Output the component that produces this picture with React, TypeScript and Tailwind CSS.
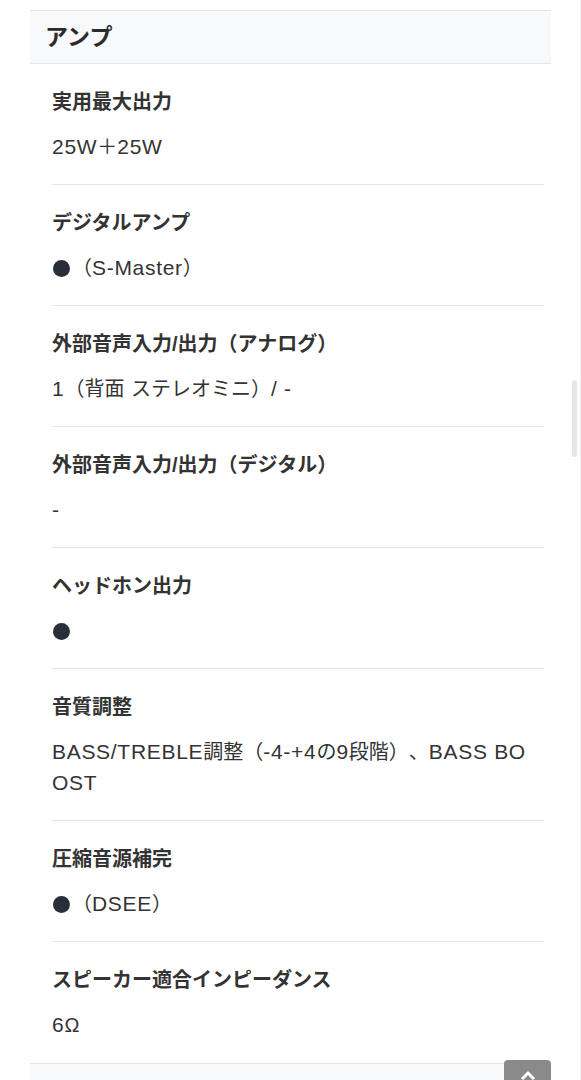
import React from "react";

const Dot = () => (
  <span className="inline-block align-middle w-[17px] h-[17px] rounded-full bg-[#2a2e39] ml-[1px] mr-[2px] -mt-[3px]" />
);

const Txt = ({ s }: { s: string }) => (
  <>
    {s.split(/([\x20-\x7e]+)/).map((p, i) =>
      /^[\x20-\x7e]+$/.test(p) ? (
        <span key={i} className="text-[21px] leading-[16px] tracking-[0.7px]">
          {p}
        </span>
      ) : (
        <React.Fragment key={i}>{p}</React.Fragment>
      )
    )}
  </>
);

const rows: { label: string; value: React.ReactNode }[] = [
  { label: "実用最大出力", value: <Txt s="25W＋25W" /> },
  { label: "デジタルアンプ", value: <><Dot /><Txt s="（S-Master）" /></> },
  { label: "外部音声入力/出力（アナログ）", value: <Txt s="1（背面 ステレオミニ）/ -" /> },
  { label: "外部音声入力/出力（デジタル）", value: <Txt s="-" /> },
  { label: "ヘッドホン出力", value: <Dot /> },
  { label: "音質調整", value: <Txt s="BASS/TREBLE調整（-4-+4の9段階）、BASS BOOST" /> },
  { label: "圧縮音源補完", value: <><Dot /><Txt s="（DSEE）" /></> },
  { label: "スピーカー適合インピーダンス", value: <Txt s="6Ω" /> },
];

export default function App() {
  return (
    <div
      className="relative min-h-[1080px] bg-white pt-[10px] overflow-hidden [text-spacing-trim:space-all]"
      style={{ fontFamily: '"Liberation Sans", "Noto Sans CJK JP", sans-serif' }}
    >
      <div className="mx-[30px] w-[521px]">
        <div className="h-[54px] border-y border-[#e4e6ea] bg-[#f8f9fb] pl-[15px] flex items-center">
          <h2 className="text-[23px] font-bold text-[#2b2b2b] leading-none">アンプ</h2>
        </div>
        <div className="pl-[22px] pr-[7px]">
          {rows.map((r, i) => (
            <div
              key={i}
              className={
                "pt-[24px] pb-[21px] " +
                (i < rows.length - 1 ? "border-b border-[#e6e6e6]" : "pb-[22px]")
              }
            >
              <div className="text-[20px] font-bold leading-[28px] text-[#333333]">{r.label}</div>
              <div className="mt-[16px] mr-[10px] min-h-[31px] text-[20px] leading-[31px] text-[#333333] break-all">
                {r.value}
              </div>
            </div>
          ))}
        </div>
        <div className="h-[40px] border-t border-[#e4e6ea] bg-[#f8f9fb]" />
      </div>

      {/* scrollbar */}
      <div className="absolute left-[572px] top-[380px] h-[77px] w-[5px] rounded-full bg-[#e6e6e6]" />
      <div className="absolute right-0 top-0 h-full w-px bg-[#f1f1f1]" />

      {/* back to top */}
      <div className="absolute left-[504px] top-[1060px] h-[40px] w-[47px] rounded-[4px] bg-[#8a8a8a] flex justify-center pt-[10px]">
        <svg width="16" height="10" viewBox="0 0 16 10">
          <path d="M2 9 L8 3 L14 9" stroke="white" strokeWidth="3" fill="none" />
        </svg>
      </div>
    </div>
  );
}
